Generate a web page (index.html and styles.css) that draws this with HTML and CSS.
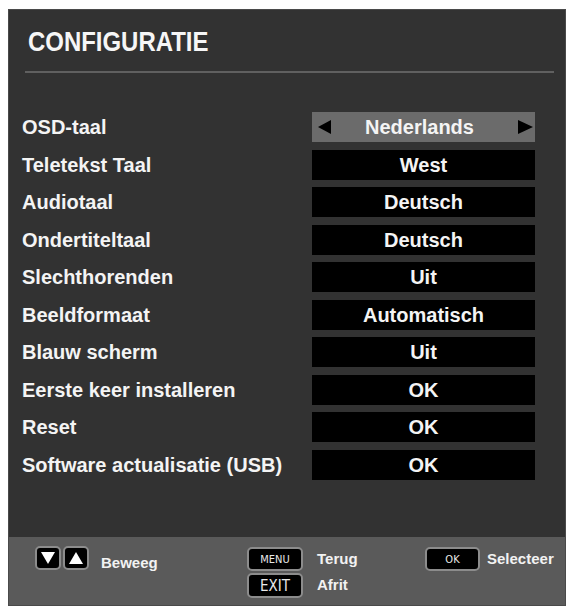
FILE: index.html
```html
<!DOCTYPE html>
<html lang="nl">
<head>
<meta charset="utf-8">
<title>Configuratie</title>
<link rel="stylesheet" href="styles.css">
</head>
<body>
<div class="panel">
  <div class="main">
    <h1 class="title"><span class="title-text">CONFIGURATIE</span></h1>
    <div class="sep"></div>
    <div class="rows">
      <div class="row"><span class="label">OSD-taal</span>
        <span class="value value-active">
          <svg class="arrow" width="13" height="14" viewBox="0 0 13 14"><polygon points="13,0 13,14 0,7" fill="#000"/></svg>
          <span class="value-text">Nederlands</span>
          <svg class="arrow" width="15" height="14" viewBox="0 0 15 14"><polygon points="0,0 0,14 15,7" fill="#000"/></svg>
        </span></div>
      <div class="row"><span class="label">Teletekst Taal</span><span class="value">West</span></div>
      <div class="row"><span class="label">Audiotaal</span><span class="value">Deutsch</span></div>
      <div class="row"><span class="label">Ondertiteltaal</span><span class="value">Deutsch</span></div>
      <div class="row"><span class="label">Slechthorenden</span><span class="value">Uit</span></div>
      <div class="row"><span class="label">Beeldformaat</span><span class="value">Automatisch</span></div>
      <div class="row"><span class="label">Blauw scherm</span><span class="value">Uit</span></div>
      <div class="row"><span class="label">Eerste keer installeren</span><span class="value">OK</span></div>
      <div class="row"><span class="label">Reset</span><span class="value">OK</span></div>
      <div class="row"><span class="label">Software actualisatie (USB)</span><span class="value">OK</span></div>
    </div>
  </div>
  <div class="footer">
    <div class="group group-move">
      <span class="key key-arrow"><svg width="14" height="12" viewBox="0 0 14 12"><polygon points="0,0 14,0 7,12" fill="#fff"/></svg></span>
      <span class="key key-arrow"><svg width="14" height="12" viewBox="0 0 14 12"><polygon points="0,12 14,12 7,0" fill="#fff"/></svg></span>
      <span class="hint hint-move">Beweeg</span>
    </div>
    <div class="group group-menu">
      <span class="key key-text key-small">MENU</span><span class="hint">Terug</span>
      <span class="key key-text key-exit">EXIT</span><span class="hint">Afrit</span>
    </div>
    <div class="group group-ok">
      <span class="key key-text key-small key-ok">OK</span><span class="hint">Selecteer</span>
    </div>
  </div>
</div>
</body>
</html>
```

FILE: styles.css
```css
* { box-sizing: border-box; }
html, body { margin: 0; padding: 0; background: #ffffff; }
body { font-family: "Liberation Sans", Arial, sans-serif; color: #f4f4f4; }

.panel {
  margin: 9px 0 0 8px;
  width: 558px;
  height: 597px;
  border: 1px solid #4a4a4a;
  display: flex;
  flex-direction: column;
  background: #323232;
}

.main { flex: 1; display: flex; flex-direction: column; }

.title {
  margin: 0;
  padding: 16px 0 0 19px;
  font-size: 28px;
  line-height: 32px;
  font-weight: bold;
  color: #f6f6f6;
}
.title-text { display: inline-block; transform: scaleX(0.855); transform-origin: left center; }

.sep {
  margin: 13px 11px 0 16px;
  height: 2px;
  background: #606060;
}

.rows {
  margin-top: 39px;
  padding: 0 30px 0 13px;
  display: flex;
  flex-direction: column;
  gap: 7.55px;
}

.row { display: flex; align-items: center; height: 30px; }
.label { flex: 1; font-size: 20px; font-weight: bold; line-height: 24px; white-space: nowrap; }

.value {
  width: 223px;
  height: 30px;
  background: #000;
  display: flex;
  align-items: center;
  justify-content: center;
  font-size: 20px;
  font-weight: bold;
  line-height: 24px;
}
.value-active { background: #6b6b6b; justify-content: space-between; padding: 0 2px 0 6px; }
.value-text { flex: 1; text-align: center; padding-right: 10px; }
.arrow { display: block; }

.footer {
  height: 68px;
  background: #5a5a5a;
  padding: 9px 0 0 26px;
  display: grid;
  grid-template-columns: 212px 178px auto;
  align-items: start;
}

.group { display: flex; align-items: flex-start; }
.group-move { gap: 2px; }
.group-menu {
  display: grid;
  grid-template-columns: 56px auto;
  column-gap: 14px;
  row-gap: 2px;
  margin-top: 1px;
}
.group-ok { margin-top: 1px; gap: 7px; }

.key {
  background: #000;
  border: 2px solid #8c8c8c;
  border-radius: 5px;
  display: flex;
  align-items: center;
  justify-content: center;
}
.key-arrow { width: 26px; height: 24px; }
.key-arrow svg { display: block; }
.key-text {
  width: 56px;
  height: 24px;
  font-family: "Liberation Sans Narrow", "DejaVu Sans Condensed", "Liberation Sans", sans-serif;
  color: #e8e8e8;
}
.key-small { font-size: 11px; }
.key-exit { font-size: 15px; height: 25px; }
.key-ok { width: 55px; }

.hint {
  font-size: 15px;
  font-weight: bold;
  line-height: 24px;
  color: #f2f2f2;
  white-space: nowrap;
}
.hint-move { margin-left: 10px; padding-top: 5px; }
```
